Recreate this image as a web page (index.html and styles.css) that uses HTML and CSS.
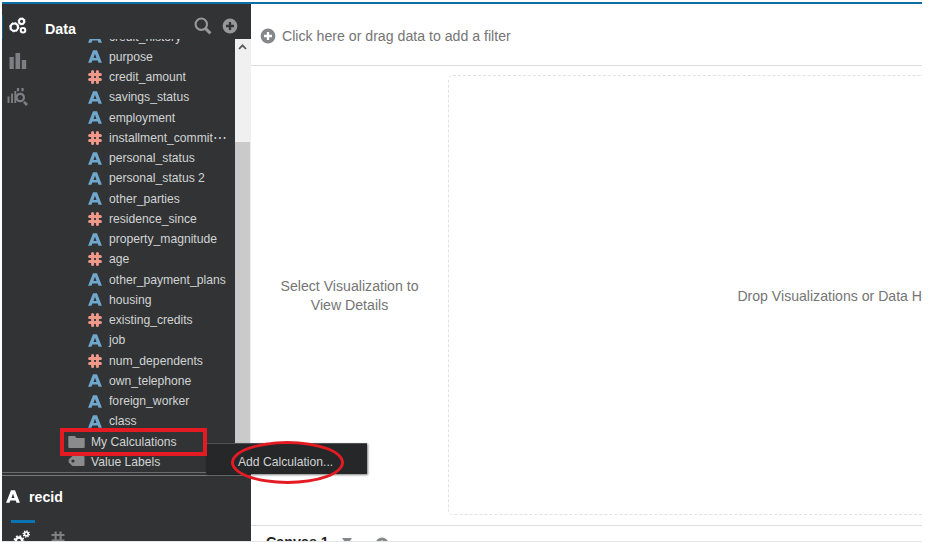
FILE: index.html
```
<!DOCTYPE html>
<html lang="en">
<head>
<meta charset="utf-8">
<title>Data Visualization</title>
<link rel="stylesheet" href="styles.css">
</head>
<body>
<svg class="defs" aria-hidden="true">
  <symbol id="attr" viewBox="0 0 14 13"><path fill-rule="evenodd" d="M5 .3h4L13.9 12.7H10.5L9.7 10.5H4.3L3.5 12.7H.1ZM7 3.8 5.5 7.9H8.5Z"/></symbol>
  <symbol id="hash" viewBox="0 0 14 14"><path d="M4.6 1.6v10.8M9.4 1.6v10.8M1.6 4.6h10.8M1.6 9.4h10.8" fill="none" stroke="currentColor" stroke-width="3" stroke-linecap="round"/></symbol>
  <symbol id="plus" viewBox="0 0 16 16"><circle cx="8" cy="8" r="7.4"/><path d="M8 4v8M4 8h8" stroke="var(--cut)" stroke-width="2.3"/></symbol>
</svg>
<div class="app">
  <aside class="side">
    <div class="upper">
      <nav class="rail">
        <div class="current"><svg class="gears" viewBox="0 0 18 18"><g fill="none" stroke="#fff"><circle cx="5.3" cy="10.2" r="3.7" stroke-width="2.2"/><circle cx="12.6" cy="4.3" r="2.6" stroke-width="2"/><circle cx="14" cy="13.2" r="2.3" stroke-width="2"/><circle cx="5.3" cy="10.2" r="4.7" stroke-width=".8" stroke-dasharray="1.8 1.9"/><circle cx="12.6" cy="4.3" r="3.6" stroke-width=".7" stroke-dasharray="1.4 1.4"/></g></svg></div>
        <svg class="bars" viewBox="0 0 18 18"><path d="M.5 5h4.3v12H.5zM6.5 1h4.6v16H6.5zM12.8 8h4.4v9h-4.4z" fill="#7d7f82"/></svg>
        <svg class="analyze" viewBox="0 0 21 20"><g fill="none" stroke="#7d7f82"><path d="M1.5 9.500v6.500M5 6.500V16M8.300 4V16" stroke-width="1.900"/><circle cx="13.200" cy="10.500" r="3.700" stroke-width="2.300"/><path d="M11 1v3.200M15.500 1V4.200" stroke-width="2.200"/><path d="M17 14.800 20 18" stroke-width="2.700"/></g></svg>
      </nav>
      <section class="data">
        <header class="head"><h1>Data</h1>
          <svg class="search" viewBox="0 0 18 18" fill="none" stroke="#96989a"><circle cx="7.3" cy="7.2" r="5.7" stroke-width="2.1"/><path d="m11.6 11.6 4.8 4.8" stroke-width="2.9"/></svg>
          <svg class="add"><use href="#plus"/></svg>
        </header>
        <div class="scroller">
          <ul class="fields">
            <li><svg><use href="#attr"/></svg>credit_history</li>
            <li><svg><use href="#attr"/></svg>purpose</li>
            <li class="num"><svg><use href="#hash"/></svg>credit_amount</li>
            <li><svg><use href="#attr"/></svg>savings_status</li>
            <li><svg><use href="#attr"/></svg>employment</li>
            <li class="num"><svg><use href="#hash"/></svg><span>installment_commit<span class="more">⋯</span></span></li>
            <li><svg><use href="#attr"/></svg>personal_status</li>
            <li><svg><use href="#attr"/></svg>personal_status 2</li>
            <li><svg><use href="#attr"/></svg>other_parties</li>
            <li class="num"><svg><use href="#hash"/></svg>residence_since</li>
            <li><svg><use href="#attr"/></svg>property_magnitude</li>
            <li class="num"><svg><use href="#hash"/></svg>age</li>
            <li><svg><use href="#attr"/></svg>other_payment_plans</li>
            <li><svg><use href="#attr"/></svg>housing</li>
            <li class="num"><svg><use href="#hash"/></svg>existing_credits</li>
            <li><svg><use href="#attr"/></svg>job</li>
            <li class="num"><svg><use href="#hash"/></svg>num_dependents</li>
            <li><svg><use href="#attr"/></svg>own_telephone</li>
            <li><svg><use href="#attr"/></svg>foreign_worker</li>
            <li><svg><use href="#attr"/></svg>class</li>
            <li class="group"><svg viewBox="0 0 17 14"><path d="M1 1h6l1.500 2H16a.7.7 0 0 1 .7.7V12a1 1 0 0 1-1 1H1.300a1 1 0 0 1-1-1V1.700A.7.7 0 0 1 1 1Z"/></svg>My Calculations</li>
            <li class="group"><svg viewBox="0 0 17 14"><path fill-rule="evenodd" d="M4.500 1H15.500a1 1 0 0 1 1 1V10a1 1 0 0 1-1 1H4.500L.7 7.500V4.500ZM5 4.400a1.600 1.600 0 1 0 0 3.200 1.600 1.600 0 0 0 0-3.200Z"/></svg>Value Labels</li>
          </ul>
          <div class="scrollbar"><svg viewBox="0 0 15 15"><path d="m4 10 3.500-3.700L11 10" fill="none" stroke="#555" stroke-width="1.700"/></svg><div class="thumb"></div></div>
        </div>
      </section>
    </div>
    <section class="props">
      <div class="recid"><svg><use href="#attr"/></svg>recid</div>
      <div class="tabs">
        <div class="tab on"><svg viewBox="0 0 18 18" fill="none" stroke="#fff"><circle cx="6" cy="10.5" r="3" stroke-width="2.3"/><circle cx="6" cy="10.5" r="4.6" stroke-width="1.6" stroke-dasharray="1.8 1.8"/><circle cx="13.3" cy="4" r="1.9" stroke-width="1.7"/><circle cx="13.3" cy="4" r="3.1" stroke-width="1.3" stroke-dasharray="1.2 1.2"/></svg></div>
        <div class="tab"><svg viewBox="0 0 14 14"><path d="M4.600 .5v13M9.600 .5v13M.5 4h13M.5 9.500H13.500" fill="none" stroke="#7d7f82" stroke-width="2.200"/></svg></div>
      </div>
    </section>
  </aside>
  <main class="main">
    <div class="filter"><svg><use href="#plus"/></svg>Click here or drag data to add a filter</div>
    <div class="work">
      <div class="details">Select Visualization to<br>View Details</div>
      <div class="drop"><span>Drop Visualizations or Data H</span></div>
    </div>
    <footer class="canvases"><b>Canvas 1</b><svg class="caret" viewBox="0 0 10 8"><path d="M0 0h10L5 7Z"/></svg><svg class="new"><use href="#plus"/></svg></footer>
  </main>
  <div class="menu">Add Calculation...</div>
  <div class="box"></div>
  <div class="ring"></div>
</div>
</body>
</html>
```
FILE: styles.css
```
* { box-sizing: border-box; }
body { margin: 0; background: #fff; font-family: "Liberation Sans", Arial, sans-serif; }
svg { display: block; flex: none; }
.defs { position: absolute; width: 0; height: 0; }
.app { position: relative; width: 920px; height: 540px; margin: 2px 0 0 2px; display: flex; overflow: hidden; border-top: 2px solid #0d6fa5; border-bottom: 1px solid #e4e5e6; }
.side { width: 249px; background: #313335; color: #d2d3d4; display: flex; flex-direction: column; flex: none; --cut: #313335; }
.upper { height: 468px; display: flex; box-shadow: 0 1px #696b6d; }
.rail { width: 43px; padding-top: 11px; flex: none; }
.current { height: 24px; padding: 2px 0 0 6px; border-left: 1px solid #0d5c8c; }
.gears { width: 18px; height: 18px; }
.bars { width: 18px; height: 18px; margin: 13px 0 0 7px; }
.analyze { width: 21px; height: 20px; margin: 17px 0 0 5px; }
.data { flex: 1; display: flex; flex-direction: column; }
.head { height: 35px; display: flex; align-items: center; padding: 9px 13px 0 0; }
.head h1 { margin: 5px auto 0 0; color: #fff; font-size: 14.3px; line-height: 18px; }
.search { width: 18px; height: 18px; margin-right: 10px; }
.add { width: 16px; height: 16px; fill: #96989a; }
.scroller { height: 433px; overflow: hidden; display: flex; }
.fields { list-style: none; margin: -12.5px 0 0; padding: 0; width: 190px; flex: none; }
.fields li { height: 20.25px; display: flex; align-items: center; gap: 7px; padding-left: 43px; font-size: 12.15px; white-space: nowrap; }
.fields svg { width: 14px; height: 13px; fill: #6fa7cd; }
.fields .num svg { height: 14px; color: #f0988a; }
.more { letter-spacing: 2px; display: inline-block; transform: scaleX(1.15); transform-origin: left; }
.fields .group { padding-left: 23px; gap: 6px; }
.fields .group svg { width: 17px; height: 14px; fill: #898b8d; }
.scrollbar { width: 16px; background: #f0f0f0; margin-left: auto; }
.scrollbar svg { width: 15px; height: 15px; }
.thumb { height: 330px; margin-top: 88px; background: #cacaca; width: 15px; }
.props { border-top: 1px solid #77797b; margin-top: 3px; flex: 1; }
.recid { display: flex; align-items: center; gap: 9px; padding-left: 4px; height: 41px; color: #fff; font-weight: bold; font-size: 14.2px; }
.recid svg { width: 14px; height: 13px; fill: #fff; }
.tabs { display: flex; margin-left: 9px; gap: 11px; }
.tab { width: 24px; height: 22px; padding: 8px 5px 0; border-top: 3px solid transparent; margin-top: 3px; overflow: hidden; }
.tab.on { border-color: #0a73b4; padding: 7px 2px 0; }
.tab svg { width: 14px; height: 14px; }
.tab.on svg { width: 18px; height: 18px; }
.main { width: 671px; --cut: #fff; display: flex; flex-direction: column; color: #757575; font-size: 14.15px; }
.filter { height: 62px; flex: none; border-bottom: 1px solid #dedede; display: flex; align-items: center; gap: 6px; padding: 3px 0 0 9px; }
.filter svg { width: 16px; height: 16px; fill: #858789; }
.work { height: 460px; flex: none; display: flex; border-bottom: 1px solid #dedede; }
.details { width: 197px; padding-top: 211px; text-align: center; line-height: 18.5px; }
.drop { flex: 1; margin: 9px 0 10px; border: 1px dashed #e2e2e2; border-right: 0; border-radius: 5px 0 0 5px; display: flex; align-items: center; justify-content: flex-end; white-space: nowrap; font-size: 14.1px; padding-top: 1px; }
.canvases { display: flex; align-items: flex-start; padding: 7px 0 0 15px; color: #222; font-size: 14.3px; line-height: 18px; height: 15px; overflow: hidden; }
.caret { width: 10px; height: 8px; margin: 5px 0 0 13px; fill: #858789; }
.new { width: 14px; height: 14px; margin: 4px 0 0 23px; fill: #858789; }
.menu { position: absolute; left: 204px; top: 439px; width: 161px; height: 31px; background: #252729; color: #d2d3d4; font-size: 12.15px; line-height: 36px; padding-left: 32px; border-top: 1px solid #505254; box-shadow: 1px 1px 2px rgba(0,0,0,.5); }
.box { position: absolute; left: 58px; top: 424px; width: 147px; height: 28px; border: 4px solid #e41b23; }
.ring { position: absolute; left: 229px; top: 437px; width: 113px; height: 43px; border: 3px solid #e41b23; border-radius: 50%; }
```
